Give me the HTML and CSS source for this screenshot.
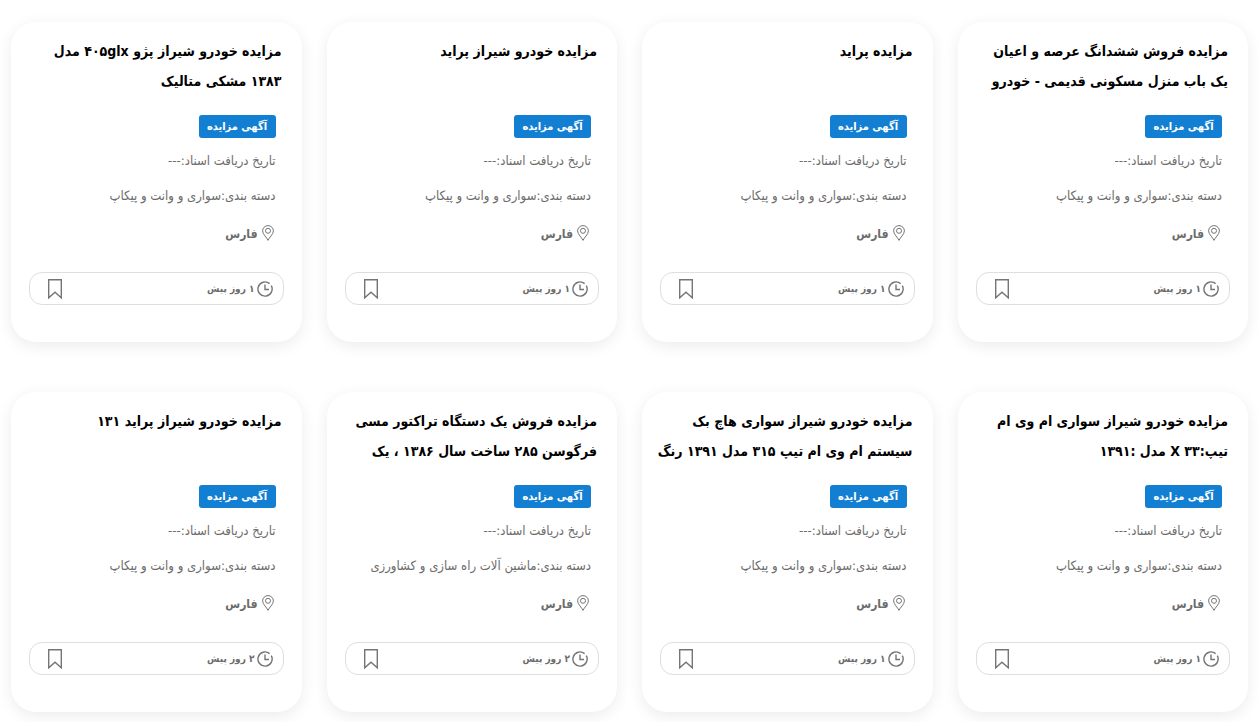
FILE: index.html
```
<!DOCTYPE html>
<html lang="fa" dir="rtl">
<head>
<meta charset="utf-8">
<meta name="viewport" content="width=device-width, initial-scale=1">
<title>مزایده خودرو</title>
<link rel="stylesheet" href="styles.css">
</head>
<body>
<svg class="sprite" aria-hidden="true">
  <symbol id="pin" viewBox="0 0 12 16"><path d="M6 15.400C5 12.600.6 9.400.6 5.900a5.400 5.300 0 0 1 10.800 0C11.400 9.400 7 12.600 6 15.400z"/><circle cx="6" cy="5.800" r="2.500"/></symbol>
  <symbol id="clock" viewBox="0 0 16 16"><path d="M12.600 2.600A7.100 7.100 0 1 0 14.300 4.700M8 3.500V8.500H12"/></symbol>
  <symbol id="bookmark" viewBox="0 0 14 20"><path d="M.7.7H13.300V18.800L7 13.200.7 18.800z"/></symbol>
</svg>
<main class="grid">
  <article class="card">
    <h3 class="title"><a href="#">مزایده فروش ششدانگ عرصه و اعیان<br>یک باب منزل مسکونی قدیمی - خودرو</a></h3>
    <div class="info">
      <span class="badge">آگهی مزایده</span>
      <p class="meta">تاریخ دریافت اسناد:---</p>
      <p class="meta">دسته بندی:سواری و وانت و پیکاپ</p>
      <p class="place"><svg class="pin"><use href="#pin"/></svg>فارس</p>
    </div>
    <div class="foot"><span class="time"><svg class="clock"><use href="#clock"/></svg>۱ روز پیش</span><button class="save" type="button" aria-label="نشان کردن"><svg class="bookmark"><use href="#bookmark"/></svg></button></div>
  </article>
  <article class="card">
    <h3 class="title"><a href="#">مزایده پراید</a></h3>
    <div class="info">
      <span class="badge">آگهی مزایده</span>
      <p class="meta">تاریخ دریافت اسناد:---</p>
      <p class="meta">دسته بندی:سواری و وانت و پیکاپ</p>
      <p class="place"><svg class="pin"><use href="#pin"/></svg>فارس</p>
    </div>
    <div class="foot"><span class="time"><svg class="clock"><use href="#clock"/></svg>۱ روز پیش</span><button class="save" type="button" aria-label="نشان کردن"><svg class="bookmark"><use href="#bookmark"/></svg></button></div>
  </article>
  <article class="card">
    <h3 class="title"><a href="#">مزایده خودرو شیراز پراید</a></h3>
    <div class="info">
      <span class="badge">آگهی مزایده</span>
      <p class="meta">تاریخ دریافت اسناد:---</p>
      <p class="meta">دسته بندی:سواری و وانت و پیکاپ</p>
      <p class="place"><svg class="pin"><use href="#pin"/></svg>فارس</p>
    </div>
    <div class="foot"><span class="time"><svg class="clock"><use href="#clock"/></svg>۱ روز پیش</span><button class="save" type="button" aria-label="نشان کردن"><svg class="bookmark"><use href="#bookmark"/></svg></button></div>
  </article>
  <article class="card">
    <h3 class="title"><a href="#">مزایده خودرو شیراز پژو <bdi dir="ltr">۴۰۵glx</bdi> مدل<br>۱۳۸۳ مشکی متالیک</a></h3>
    <div class="info">
      <span class="badge">آگهی مزایده</span>
      <p class="meta">تاریخ دریافت اسناد:---</p>
      <p class="meta">دسته بندی:سواری و وانت و پیکاپ</p>
      <p class="place"><svg class="pin"><use href="#pin"/></svg>فارس</p>
    </div>
    <div class="foot"><span class="time"><svg class="clock"><use href="#clock"/></svg>۱ روز پیش</span><button class="save" type="button" aria-label="نشان کردن"><svg class="bookmark"><use href="#bookmark"/></svg></button></div>
  </article>
  <article class="card">
    <h3 class="title"><a href="#">مزایده خودرو شیراز سواری ام وی ام<br>تیپ:<bdi dir="ltr">X ۳۳</bdi> مدل :۱۳۹۱</a></h3>
    <div class="info">
      <span class="badge">آگهی مزایده</span>
      <p class="meta">تاریخ دریافت اسناد:---</p>
      <p class="meta">دسته بندی:سواری و وانت و پیکاپ</p>
      <p class="place"><svg class="pin"><use href="#pin"/></svg>فارس</p>
    </div>
    <div class="foot"><span class="time"><svg class="clock"><use href="#clock"/></svg>۱ روز پیش</span><button class="save" type="button" aria-label="نشان کردن"><svg class="bookmark"><use href="#bookmark"/></svg></button></div>
  </article>
  <article class="card">
    <h3 class="title"><a href="#">مزایده خودرو شیراز سواری هاچ بک<br>سیستم ام وی ام تیپ ۳۱۵ مدل ۱۳۹۱ رنگ</a></h3>
    <div class="info">
      <span class="badge">آگهی مزایده</span>
      <p class="meta">تاریخ دریافت اسناد:---</p>
      <p class="meta">دسته بندی:سواری و وانت و پیکاپ</p>
      <p class="place"><svg class="pin"><use href="#pin"/></svg>فارس</p>
    </div>
    <div class="foot"><span class="time"><svg class="clock"><use href="#clock"/></svg>۱ روز پیش</span><button class="save" type="button" aria-label="نشان کردن"><svg class="bookmark"><use href="#bookmark"/></svg></button></div>
  </article>
  <article class="card">
    <h3 class="title"><a href="#">مزایده فروش یک دستگاه تراکتور مسی<br>فرگوسن ۲۸۵ ساخت سال ۱۳۸۶ ، یک</a></h3>
    <div class="info">
      <span class="badge">آگهی مزایده</span>
      <p class="meta">تاریخ دریافت اسناد:---</p>
      <p class="meta">دسته بندی:ماشین آلات راه سازی و کشاورزی</p>
      <p class="place"><svg class="pin"><use href="#pin"/></svg>فارس</p>
    </div>
    <div class="foot"><span class="time"><svg class="clock"><use href="#clock"/></svg>۲ روز پیش</span><button class="save" type="button" aria-label="نشان کردن"><svg class="bookmark"><use href="#bookmark"/></svg></button></div>
  </article>
  <article class="card">
    <h3 class="title"><a href="#">مزایده خودرو شیراز پراید ۱۳۱</a></h3>
    <div class="info">
      <span class="badge">آگهی مزایده</span>
      <p class="meta">تاریخ دریافت اسناد:---</p>
      <p class="meta">دسته بندی:سواری و وانت و پیکاپ</p>
      <p class="place"><svg class="pin"><use href="#pin"/></svg>فارس</p>
    </div>
    <div class="foot"><span class="time"><svg class="clock"><use href="#clock"/></svg>۲ روز پیش</span><button class="save" type="button" aria-label="نشان کردن"><svg class="bookmark"><use href="#bookmark"/></svg></button></div>
  </article>
</main>
</body>
</html>
```
FILE: styles.css
```
* { box-sizing: border-box; }

body {
  margin: 0;
  background: #fff;
  font-family: "DejaVu Sans Condensed", "DejaVu Sans", sans-serif;
  color: #6c6c6c;
}

.sprite { display: none; }

svg {
  fill: none;
  stroke: #757575;
  flex: none;
}

.grid {
  display: grid;
  grid-template-columns: repeat(4, minmax(0, 1fr));
  gap: 50px 25px;
  padding: 22px 11px 10px;
}

.card {
  display: flex;
  flex-direction: column;
  padding: 14px 18px 37px;
  border-radius: 25px;
  background: #fff;
  box-shadow: 0 4px 16px rgba(0, 0, 0, 0.08);
}

.title {
  min-height: 60px;
  margin: 0 2px 19px -14px;
  font-size: 14px;
  line-height: 30px;
  font-weight: 700;
  white-space: nowrap;
}

.title a {
  color: #000;
  text-decoration: none;
}

.info {
  display: flex;
  flex-direction: column;
  align-items: flex-start;
  padding: 0 8px;
}

.badge {
  width: 77px;
  margin-bottom: 5px;
  border-radius: 3px;
  background: #127fd2;
  color: #fff;
  font-size: 11px;
  line-height: 23px;
  font-weight: 700;
  text-align: center;
  white-space: nowrap;
}

.meta {
  margin: 0;
  font-size: 13px;
  line-height: 35px;
  white-space: nowrap;
}

.place {
  display: flex;
  align-items: center;
  gap: 4px;
  margin: 9px 2px 26px;
  font-size: 12px;
  line-height: 24px;
  font-weight: 700;
}

.pin { width: 12px; height: 16px; margin-bottom: 2px; }

.foot {
  display: flex;
  align-items: center;
  justify-content: space-between;
  height: 33px;
  padding: 0 10px 0 18px;
  border: 1px solid #dedede;
  border-radius: 13px;
}

.foot { padding: 0 10px 0 18px; }

.time {
  display: flex;
  align-items: center;
  gap: 2px;
  font-size: 10px;
  font-weight: 700;
}

.clock { width: 16px; height: 16px; stroke-width: 1.4; }

.save {
  display: flex;
  padding: 0;
  border: 0;
  background: none;
  cursor: pointer;
}

.bookmark { width: 14px; height: 20px; stroke-width: 1.4; }
```
